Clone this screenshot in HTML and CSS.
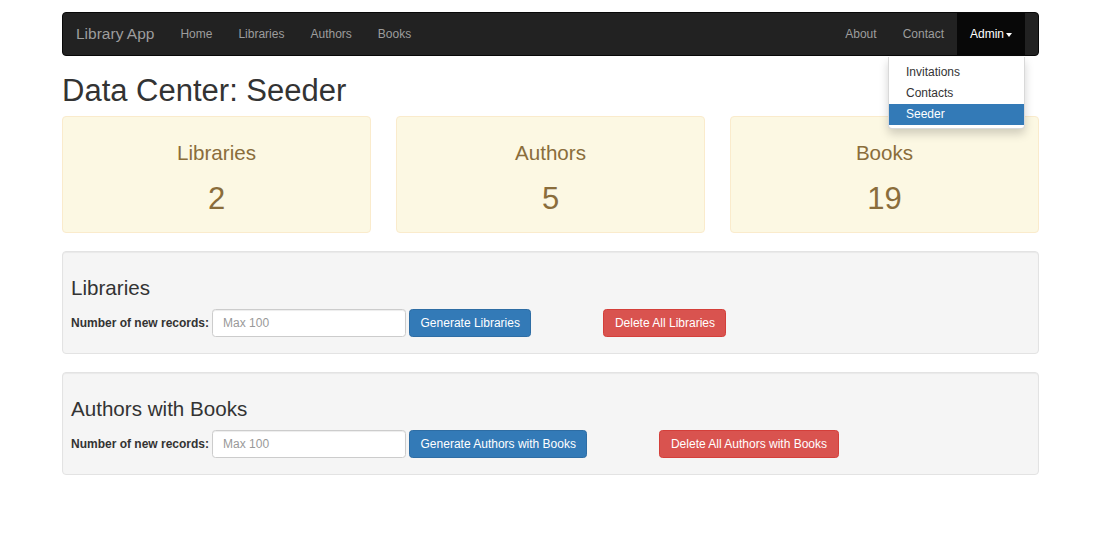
FILE: index.html
```html
<!DOCTYPE html>
<html lang="en">
<head>
<meta charset="utf-8">
<title>Data Center: Seeder</title>
<link rel="stylesheet" href="styles.css">
</head>
<body>
<div class="page">
  <nav class="navbar">
    <a class="brand" href="#">Library App</a>
    <ul class="nav">
      <li><a href="#">Home</a></li>
      <li><a href="#">Libraries</a></li>
      <li><a href="#">Authors</a></li>
      <li><a href="#">Books</a></li>
    </ul>
    <ul class="nav nav-right">
      <li><a href="#">About</a></li>
      <li><a href="#">Contact</a></li>
      <li class="dropdown">
        <a href="#" class="active">Admin<span class="caret"></span></a>
        <ul class="dropdown-menu">
          <li><a href="#">Invitations</a></li>
          <li><a href="#">Contacts</a></li>
          <li><a href="#" class="selected">Seeder</a></li>
        </ul>
      </li>
    </ul>
  </nav>

  <h1 class="page-title">Data Center: Seeder</h1>

  <div class="stats">
    <div class="stat">
      <div class="stat-title">Libraries</div>
      <div class="stat-num">2</div>
    </div>
    <div class="stat">
      <div class="stat-title">Authors</div>
      <div class="stat-num">5</div>
    </div>
    <div class="stat">
      <div class="stat-title">Books</div>
      <div class="stat-num">19</div>
    </div>
  </div>

  <div class="well">
    <h3 class="well-title">Libraries</h3>
    <form class="seed-form">
      <label class="seed-label">Number of new records:</label>
      <input class="seed-input" type="text" placeholder="Max 100">
      <button type="button" class="btn btn-primary">Generate Libraries</button>
      <button type="button" class="btn btn-danger">Delete All Libraries</button>
    </form>
  </div>

  <div class="well">
    <h3 class="well-title">Authors with Books</h3>
    <form class="seed-form">
      <label class="seed-label">Number of new records:</label>
      <input class="seed-input" type="text" placeholder="Max 100">
      <button type="button" class="btn btn-primary">Generate Authors with Books</button>
      <button type="button" class="btn btn-danger">Delete All Authors with Books</button>
    </form>
  </div>
</div>
</body>
</html>
```

FILE: styles.css
```css
* { box-sizing: border-box; }

html, body {
  margin: 0;
  background: #fff;
}

body {
  font-family: "Liberation Sans", Arial, Helvetica, sans-serif;
  font-size: 12px;
  line-height: 17px;
  color: #333;
}

a { text-decoration: none; }

.page {
  width: 977px;
  margin: 0 auto;
  padding-top: 12px;
}

/* Navbar */
.navbar {
  display: flex;
  align-items: stretch;
  height: 44px;
  padding: 0 13px;
  background: #222;
  border: 1px solid #080808;
  border-radius: 4px;
}

.brand {
  font-size: 15.5px;
  line-height: 42px;
  color: #9d9d9d;
  padding-right: 13px;
}

.nav {
  display: flex;
  list-style: none;
  margin: 0;
  padding: 0;
}

.nav > li > a {
  display: block;
  padding: 0 13px;
  line-height: 42px;
  color: #9d9d9d;
}

.nav > li > a.active {
  background: #080808;
  color: #fff;
}

.nav-right { margin-left: auto; }

.caret {
  display: inline-block;
  width: 0;
  height: 0;
  margin-left: 2px;
  vertical-align: middle;
  border-top: 4px solid;
  border-left: 3.5px solid transparent;
  border-right: 3.5px solid transparent;
}

.dropdown { position: relative; }

.dropdown-menu {
  position: absolute;
  top: 44px;
  right: 0;
  width: 137px;
  margin: 0;
  padding: 5px 0 3px;
  list-style: none;
  background: #fff;
  border: 1px solid rgba(0, 0, 0, 0.15);
  border-top: 0;
  border-radius: 0 0 4px 4px;
  box-shadow: 0 5px 10px rgba(0, 0, 0, 0.175);
  z-index: 10;
}

.dropdown-menu a {
  display: block;
  padding: 0 17px;
  line-height: 21px;
  color: #333;
}

.dropdown-menu a.selected {
  background: #337ab7;
  color: #fff;
}

/* Title */
.page-title {
  font-size: 31px;
  font-weight: normal;
  line-height: 34px;
  margin: 18px 0 8px;
  color: #333;
}

/* Stats */
.stats {
  display: grid;
  grid-template-columns: repeat(3, 1fr);
  gap: 25px;
}

.stat {
  height: 117px;
  padding-top: 24px;
  text-align: center;
  color: #8a6d3b;
  background: #fcf8e3;
  border: 1px solid #faebcc;
  border-radius: 4px;
}

.stat-title {
  font-size: 20.6px;
  line-height: 23px;
}

.stat-num {
  font-size: 31px;
  line-height: 34px;
  margin-top: 18px;
}

/* Wells */
.well {
  margin-top: 18px;
  height: 103px;
  padding: 24px 8px 0;
  background: #f5f5f5;
  border: 1px solid #e3e3e3;
  border-radius: 4px;
  box-shadow: inset 0 1px 1px rgba(0, 0, 0, 0.05);
}

.well-title {
  font-size: 20.6px;
  font-weight: normal;
  line-height: 23px;
  margin: 0 0 10px;
  color: #333;
}

.seed-form {
  display: flex;
  align-items: center;
  height: 28px;
  margin: 0;
}

.seed-label {
  font-weight: bold;
  margin-right: 3px;
}

.seed-input {
  width: 194px;
  height: 28px;
  margin: 0 3px 0 0;
  padding: 0 10px;
  font-family: inherit;
  font-size: 12px;
  color: #555;
  background: #fff;
  border: 1px solid #ccc;
  border-radius: 3.5px;
  box-shadow: inset 0 1px 1px rgba(0, 0, 0, 0.075);
}

.seed-input::placeholder { color: #999; }

.btn {
  height: 28px;
  padding: 0 10.5px;
  font-family: inherit;
  font-size: 12px;
  color: #fff;
  border: 1px solid transparent;
  border-radius: 3.5px;
  cursor: pointer;
}

.btn-primary {
  background: #337ab7;
  border-color: #2e6da4;
}

.btn-danger {
  margin-left: 72px;
  background: #d9534f;
  border-color: #d43f3a;
}
```
